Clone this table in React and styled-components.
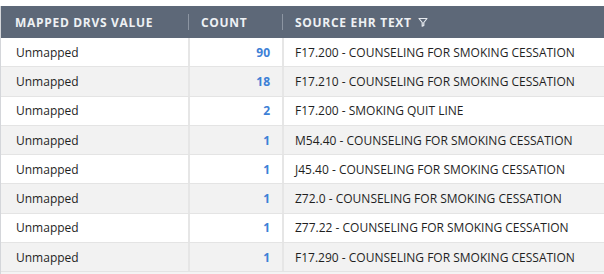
import React from "react"
import styled, { createGlobalStyle } from "styled-components"

const GlobalStyle = createGlobalStyle`
	body {
		margin: 0;
		background: #ffffff;
		font-family: "Open Sans", "Liberation Sans", sans-serif;
	}
`

const Page = styled.div`
	padding-top: 6px;
	width: 604px;
	height: 274px;
	overflow: hidden;
	box-sizing: border-box;
`

const Table = styled.div`
	border-left: 1px solid #d4d6da;
	background: #f4f4f4;
	height: 100%;
`

const Row = styled.div`
	display: grid;
	grid-template-columns: 187px 94px 1fr;
	height: ${(p) => (p.$head ? "32px" : "29.3px")};
	box-sizing: border-box;
	background: ${(p) => (p.$head ? "#5d6878" : p.$odd ? "#f2f2f2" : "#ffffff")};
	border-bottom: ${(p) => (p.$head ? "none" : "1.3px solid #e4e4e4")};
`

const HeadCell = styled.div`
	display: flex;
	align-items: center;
	gap: 6px;
	padding: 0 ${(p) => (p.$first ? "14px" : "13px")};
	position: relative;
	color: #eef1f4;
	font-size: 12px;
	font-weight: 700;
	letter-spacing: 0.7px;

	&::before {
		content: "";
		display: ${(p) => (p.$first ? "none" : "block")};
		position: absolute;
		left: 0;
		top: 8px;
		bottom: 8px;
		width: 1px;
		background: #8c95a2;
	}
`

const Cell = styled.div`
	display: flex;
	align-items: center;
	justify-content: ${(p) => (p.$right ? "flex-end" : "flex-start")};
	padding: 0 12px 0 ${(p) => (p.$first ? "15px" : "11px")};
	border-left: ${(p) => (p.$first ? "none" : "2px solid #e6e6e6")};
	font-size: 12px;
	color: ${(p) => (p.$count ? "#3d7fd6" : "#1f1f1f")};
	font-weight: ${(p) => (p.$count ? 700 : 400)};
	white-space: nowrap;
`

const FilterIcon = () => (
	<svg width="10" height="10" viewBox="0 0 10 10">
		<path d="M1 1.5 H9 L5.8 5.5 V8.5 L4.2 9.2 V5.5 Z" fill="none" stroke="#e6eaef" strokeWidth="1.2" strokeLinejoin="round" />
	</svg>
)

const rows = [
	["Unmapped", 90, "F17.200 - COUNSELING FOR SMOKING CESSATION"],
	["Unmapped", 18, "F17.210 - COUNSELING FOR SMOKING CESSATION"],
	["Unmapped", 2, "F17.200 - SMOKING QUIT LINE"],
	["Unmapped", 1, "M54.40 - COUNSELING FOR SMOKING CESSATION"],
	["Unmapped", 1, "J45.40 - COUNSELING FOR SMOKING CESSATION"],
	["Unmapped", 1, "Z72.0 - COUNSELING FOR SMOKING CESSATION"],
	["Unmapped", 1, "Z77.22 - COUNSELING FOR SMOKING CESSATION"],
	["Unmapped", 1, "F17.290 - COUNSELING FOR SMOKING CESSATION"],
]

const App = () => {
	return (
		<Page>
			<GlobalStyle />
			<Table>
				<Row $head>
					<HeadCell $first>MAPPED DRVS VALUE</HeadCell>
					<HeadCell>COUNT</HeadCell>
					<HeadCell>
						SOURCE EHR TEXT <FilterIcon />
					</HeadCell>
				</Row>
				{rows.map((r, i) => (
					<Row key={i} $odd={i % 2 === 1}>
						<Cell $first>{r[0]}</Cell>
						<Cell $right $count>{r[1]}</Cell>
						<Cell>{r[2]}</Cell>
					</Row>
				))}
			</Table>
		</Page>
	)
}

export default App
